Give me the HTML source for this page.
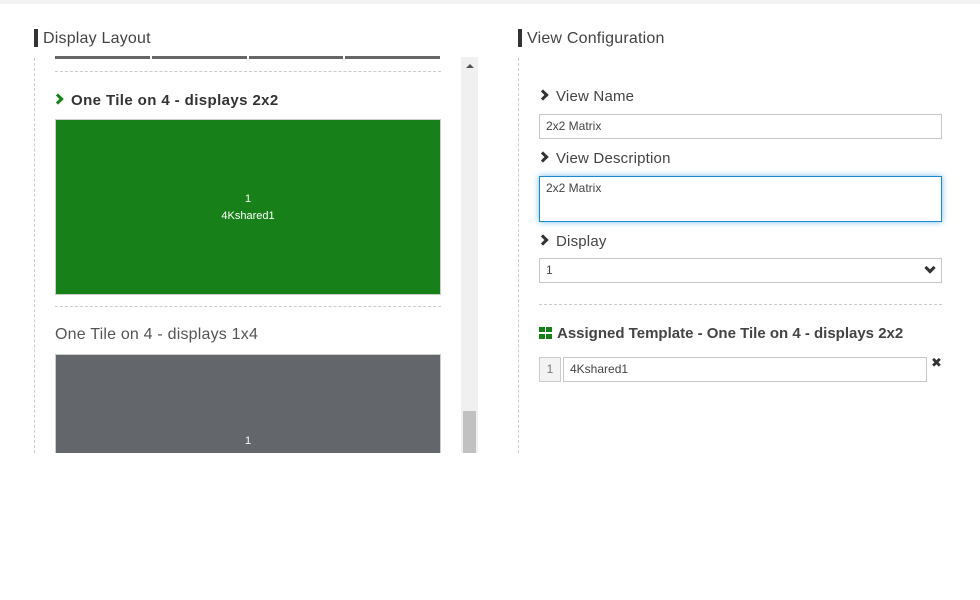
<!DOCTYPE html>
<html><head><meta charset="utf-8"><style>
*{box-sizing:border-box;margin:0;padding:0}
body{width:980px;height:600px;background:#fff;font-family:"Liberation Sans","DejaVu Sans",sans-serif;color:#333;position:relative;overflow:hidden}
.top{position:absolute;left:0;top:0;width:980px;height:4px;background:#f3f3f3}
.a{position:absolute}
.h{font-size:16px;color:#444;border-left:4px solid #333;padding-left:5px;height:18px;line-height:18px;letter-spacing:.2px}
.dash{border-top:1px dashed #ccc}
.chev{display:inline-block;width:8px;height:8px;border-right:3px solid #333;border-bottom:3px solid #333;transform:rotate(-45deg);margin-right:9px;vertical-align:2px}
.lbl{font-size:15px;color:#444;letter-spacing:.2px}
.inp{border:1px solid #c8c8c8;font-size:12px;color:#444;padding-left:6px;background:#fff}
</style></head><body>
<div class="top"></div>
<div class="a h" style="left:34px;top:29px;padding-top:1px">Display Layout</div>
<div class="a h" style="left:518px;top:29px;padding-top:1px">View Configuration</div>
<div class="a" style="left:34px;top:58px;height:395px;border-left:1px dashed #ccc"></div>
<div class="a" style="left:518px;top:58px;height:395px;border-left:1px dashed #ccc"></div>
<div class="a" style="left:55px;top:56px;width:95px;height:3px;background:#666"></div>
<div class="a" style="left:152px;top:56px;width:95px;height:3px;background:#666"></div>
<div class="a" style="left:249px;top:56px;width:94px;height:3px;background:#666"></div>
<div class="a" style="left:345px;top:56px;width:95px;height:3px;background:#666"></div>
<div class="a dash" style="left:55px;top:71px;width:386px"></div>
<div class="a" style="left:54px;top:92px;font-size:15px;font-weight:bold;color:#333;letter-spacing:.4px"><span class="chev" style="border-color:#188018"></span>One Tile on 4 - displays 2x2</div>
<div class="a" style="left:55px;top:119px;width:386px;height:176px;background:#188018;border:1px solid #ccc;color:#fff;font-size:11px;text-align:center;padding-top:71px;line-height:17px">1<br>4Kshared1</div>
<div class="a dash" style="left:55px;top:306px;width:386px"></div>
<div class="a" style="left:55px;top:326px;font-size:16px;color:#555;letter-spacing:.2px">One Tile on 4 - displays 1x4</div>
<div class="a" style="left:55px;top:354px;width:386px;height:99px;background:#63666a;border:1px solid #ccc;border-bottom:none;color:#fff;font-size:11px;text-align:center;padding-top:80px">1</div>
<div class="a" style="left:461px;top:57px;width:17px;height:396px;background:#f0f0f0"></div>
<div class="a" style="left:466px;top:64px;width:0;height:0;border-left:4px solid transparent;border-right:4px solid transparent;border-bottom:4px solid #555"></div>
<div class="a" style="left:463px;top:411px;width:13px;height:42px;background:#c1c1c1"></div>
<div class="a lbl" style="left:539px;top:88px"><span class="chev"></span>View Name</div>
<div class="a inp" style="left:539px;top:114px;width:403px;height:25px;line-height:23px">2x2 Matrix</div>
<div class="a lbl" style="left:539px;top:150px"><span class="chev"></span>View Description</div>
<div class="a inp" style="left:539px;top:176px;width:403px;height:46px;border-color:#1a8ad0;box-shadow:0 0 6px rgba(30,140,220,.6);padding-top:4px">2x2 Matrix</div>
<div class="a lbl" style="left:539px;top:233px"><span class="chev"></span>Display</div>
<div class="a inp" style="left:539px;top:258px;width:403px;height:25px;line-height:23px">1</div>
<div class="a" style="left:926px;top:264px;width:8px;height:8px;border-right:3px solid #333;border-bottom:3px solid #333;transform:rotate(45deg)"></div>
<div class="a dash" style="left:539px;top:304px;width:403px"></div>
<div class="a" style="left:539px;top:327px;width:12px;height:12px">
 <div class="a" style="left:0;top:0;width:6px;height:5px;background:#188018"></div>
 <div class="a" style="left:7px;top:0;width:6px;height:5px;background:#188018"></div>
 <div class="a" style="left:0;top:7px;width:6px;height:5px;background:#188018"></div>
 <div class="a" style="left:7px;top:7px;width:6px;height:5px;background:#188018"></div>
</div>
<div class="a" style="left:557px;top:325px;font-size:15px;font-weight:bold;color:#444">Assigned Template - One Tile on 4 - displays 2x2</div>
<div class="a" style="left:539px;top:357px;width:22px;height:25px;background:#f3f3f3;border:1px solid #ccc;font-size:12px;color:#777;text-align:center;line-height:23px">1</div>
<div class="a inp" style="left:563px;top:357px;width:364px;height:25px;line-height:23px">4Kshared1</div>
<div class="a" style="left:931px;top:355px;font-size:13px;font-weight:bold;color:#333">✖</div>
</body></html>
